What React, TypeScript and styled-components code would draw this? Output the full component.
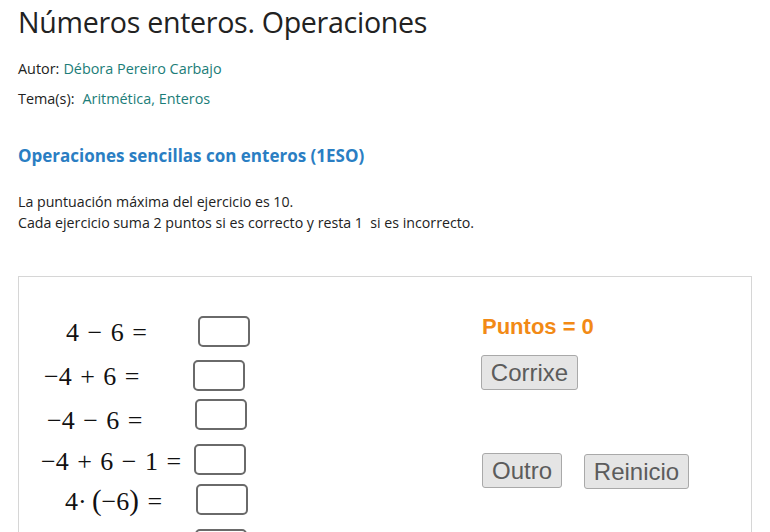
import styled, { createGlobalStyle } from "styled-components";

const GlobalStyle = createGlobalStyle`
  html, body {
    margin: 0;
    padding: 0;
    background: #ffffff;
    overflow: hidden;
  }
  body {
    font-family: "Open Sans", "Noto Sans", sans-serif;
    color: #222;
  }
`;

const Page = styled.div`
  padding: 0 18px;
  width: 770px;
  height: 532px;
  box-sizing: border-box;
  overflow: hidden;
`;

const Title = styled.h1`
  margin: 0;
  padding-top: 2px;
  font-weight: 400;
  font-size: 28.6px;
  line-height: 40px;
  color: #222;
  letter-spacing: -0.3px;
`;

const Meta = styled.div`
  font-size: 14.4px;
  line-height: 30px;
  margin-top: 12px;
  color: #222;
`;

const MetaRow = styled.div<{ $gap: number }>`
  display: flex;
  gap: ${(p) => p.$gap}px;
`;

const Link = styled.a`
  color: #1b7d78;
  text-decoration: none;
`;

const Heading = styled.h2`
  margin: 30px 0 0;
  font-size: 17px;
  font-weight: 700;
  line-height: 24px;
  color: #2a7ec3;
`;

const Rules = styled.p`
  margin: 23px 0 0;
  font-size: 14.2px;
  line-height: 21px;
  color: #222;
`;

/* GeoGebra-style applet: a free canvas, items sit where the author put them */
const Applet = styled.div`
  position: relative;
  margin-top: 43px;
  width: 734px;
  height: 300px;
  border: 1px solid #d6d6d6;
  box-sizing: border-box;
  background: #fff;
`;

const Expr = styled.div<{ $x: number; $y: number }>`
  position: absolute;
  left: ${(p) => p.$x}px;
  top: ${(p) => p.$y}px;
  font-family: "Liberation Serif", "DejaVu Serif", serif;
  font-size: 26px;
  line-height: 30px;
  word-spacing: 2px;
  color: #111;
  white-space: pre;
`;

const Paren = styled.span`
  font-size: 29px;
  line-height: 0;
`;

const AnswerBox = styled.input<{ $x: number; $y: number }>`
  position: absolute;
  left: ${(p) => p.$x}px;
  top: ${(p) => p.$y}px;
  width: 52px;
  height: 31px;
  box-sizing: border-box;
  border: 2px solid #6a6a6a;
  border-radius: 5px;
  background: #fff;
  padding: 0;
  outline: none;
`;

const Score = styled.div<{ $x: number; $y: number }>`
  position: absolute;
  left: ${(p) => p.$x}px;
  top: ${(p) => p.$y}px;
  font-family: "Liberation Sans", Arial, sans-serif;
  font-weight: 700;
  font-size: 22px;
  line-height: 26px;
  color: #f28a16;
`;

const GgbButton = styled.button<{ $x: number; $y: number; $w: number }>`
  position: absolute;
  left: ${(p) => p.$x}px;
  top: ${(p) => p.$y}px;
  width: ${(p) => p.$w}px;
  height: 35px;
  padding: 0;
  font-family: "Liberation Sans", Arial, sans-serif;
  font-size: 24px;
  color: #5c5c5c;
  background: #e5e5e5;
  border: 1px solid #a9a9a9;
  border-radius: 3px;
`;

const exprs = [
  { t: "4 − 6 =", x: 47, y: 41 },
  { t: "−4 + 6 =", x: 25, y: 85 },
  { t: "−4 − 6 =", x: 28, y: 129 },
  { t: "−4 + 6 − 1 =", x: 22, y: 170 },
];

const boxes = [
  { x: 179, y: 39 },
  { x: 174, y: 83 },
  { x: 176, y: 122 },
  { x: 175, y: 167 },
  { x: 177, y: 207 },
  { x: 176, y: 252 },
];

export default function App() {
  return (
    <Page>
      <GlobalStyle />
      <Title>Números enteros. Operaciones</Title>
      <Meta>
        <MetaRow $gap={4}>
          <span>Autor:</span>
          <Link href="#">Débora Pereiro Carbajo</Link>
        </MetaRow>
        <MetaRow $gap={8}>
          <span>Tema(s):</span>
          <Link href="#">Aritmética, Enteros</Link>
        </MetaRow>
      </Meta>
      <Heading>Operaciones sencillas con enteros (1ESO)</Heading>
      <Rules>
        La puntuación máxima del ejercicio es 10.
        <br />
        Cada ejercicio suma 2 puntos si es correcto y resta 1&nbsp; si es incorrecto.
      </Rules>
      <Applet>
        {exprs.map((e) => (
          <Expr key={e.t} $x={e.x} $y={e.y}>
            {e.t}
          </Expr>
        ))}
        <Expr $x={46} $y={210}>
          4·{"\u2009"}<Paren>(</Paren>−6<Paren>)</Paren> =
        </Expr>
        {boxes.map((b, i) => (
          <AnswerBox key={i} $x={b.x} $y={b.y} />
        ))}
        <Score $x={463} $y={37}>Puntos = 0</Score>
        <GgbButton $x={462} $y={78} $w={97}>Corrixe</GgbButton>
        <GgbButton $x={463} $y={176} $w={80}>Outro</GgbButton>
        <GgbButton $x={565} $y={177} $w={105}>Reinicio</GgbButton>
      </Applet>
    </Page>
  );
}
